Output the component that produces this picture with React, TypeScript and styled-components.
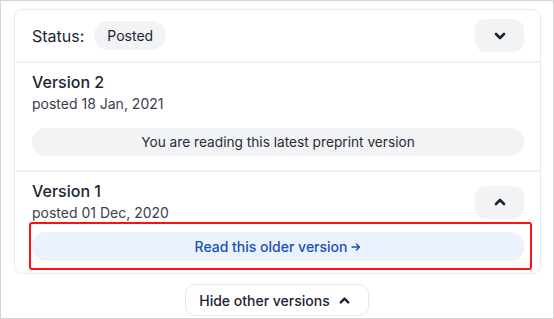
import * as React from "react";
import styled, { createGlobalStyle } from "styled-components";

const GlobalStyle = createGlobalStyle`
  html, body {
    margin: 0;
    padding: 0;
    background: #ffffff;
  }
  body {
    font-family: Inter, "Noto Sans", "Liberation Sans", sans-serif;
    color: #1b2434;
  }
  * {
    box-sizing: border-box;
  }
`;

const Frame = styled.div`
  width: 554px;
  height: 319px;
  border: 1px solid #d6d6d6;
  background: #ffffff;
  padding: 8px 13px 0 13px;
  display: flex;
  flex-direction: column;
  align-items: stretch;
  overflow: hidden;
`;

const Card = styled.div`
  width: 527px;
  border: 1px solid #e9eaec;
  border-radius: 8px;
  display: flex;
  flex-direction: column;
`;

const StatusRow = styled.div`
  display: flex;
  align-items: center;
  justify-content: space-between;
  padding: 9px 16px 9px 17px;
  border-bottom: 2px solid #f0f1f3;
`;

const StatusLeft = styled.div`
  display: flex;
  align-items: center;
  gap: 10px;
`;

const StatusLabel = styled.span`
  font-size: 16px;
  line-height: 20px;
  color: #1b2434;
`;

const Pill = styled.span`
  display: inline-flex;
  align-items: center;
  height: 29px;
  padding: 0 13px;
  border-radius: 15px;
  background: #f2f3f5;
  font-size: 14px;
  color: #1b2434;
`;

const IconButton = styled.button`
  width: 49px;
  height: 33px;
  border: none;
  border-radius: 11px;
  background: #f2f3f5;
  display: flex;
  align-items: center;
  justify-content: center;
  padding: 0;
  color: #1b2434;
  cursor: pointer;
`;

const Section = styled.div<{ $last?: boolean }>`
  display: flex;
  flex-direction: column;
  padding: 9px 16px ${(p) => (p.$last ? "12px" : "14px")} 17px;
  border-bottom: ${(p) => (p.$last ? "none" : "2px solid #f0f1f3")};
`;

const SectionHead = styled.div`
  display: flex;
  align-items: center;
  justify-content: space-between;
`;

const Titles = styled.div`
  display: flex;
  flex-direction: column;
  gap: 2px;
`;

const VersionTitle = styled.div`
  font-size: 16px;
  line-height: 20px;
  font-weight: 500;
  color: #1b2434;
`;

const PostedDate = styled.div`
  font-size: 14px;
  line-height: 20px;
  color: #3b404b;
`;

const Banner = styled.div`
  margin-top: 14px;
  height: 28px;
  border-radius: 14px;
  background: #f2f3f5;
  display: flex;
  align-items: center;
  justify-content: center;
  font-size: 13.7px;
  color: #262c38;
`;

const ReadWrap = styled.div`
  position: relative;
  margin-top: 9px;
`;

const ReadButton = styled.button`
  width: 100%;
  height: 29px;
  border: none;
  border-radius: 14px;
  background: #eaf2fd;
  display: flex;
  align-items: center;
  justify-content: center;
  gap: 4px;
  font-family: inherit;
  font-size: 14px;
  font-weight: 500;
  color: #1c4fb6;
  cursor: pointer;
`;

const Highlight = styled.div`
  position: absolute;
  top: -10px;
  bottom: -9px;
  left: -3px;
  right: -8px;
  border: 2.5px solid #ff1010;
  border-radius: 3px;
  pointer-events: none;
`;

const Footer = styled.div`
  display: flex;
  justify-content: center;
  margin-top: 10px;
`;

const HideButton = styled.button`
  height: 32px;
  display: flex;
  align-items: center;
  gap: 8px;
  padding: 0 17px 0 13px;
  border: 1px solid #e7e8ea;
  border-radius: 10px;
  background: #ffffff;
  font-family: inherit;
  font-size: 14px;
  font-weight: 500;
  color: #1b2434;
  cursor: pointer;
`;

const Chevron: React.FC<{ up?: boolean; size?: number }> = ({ up, size = 14 }) => (
  <svg width={size} height={size} viewBox="0 0 14 14" fill="none">
    <path
      d={up ? "M3 9 L7 5 L11 9" : "M3 5 L7 9 L11 5"}
      stroke="currentColor"
      strokeWidth={2.6}
      strokeLinecap="round"
      strokeLinejoin="round"
    />
  </svg>
);

const Arrow = () => (
  <svg width="10" height="10" viewBox="0 0 10 10" fill="none">
    <path
      d="M1 5 H8.5 M5.5 2 L8.5 5 L5.5 8"
      stroke="currentColor"
      strokeWidth={1.4}
      strokeLinecap="round"
      strokeLinejoin="round"
    />
  </svg>
);

export default function App() {
  return (
    <>
      <GlobalStyle />
      <Frame>
        <Card>
          <StatusRow>
            <StatusLeft>
              <StatusLabel>Status:</StatusLabel>
              <Pill>Posted</Pill>
            </StatusLeft>
            <IconButton aria-label="Expand">
              <Chevron />
            </IconButton>
          </StatusRow>

          <Section>
            <Titles>
              <VersionTitle>Version 2</VersionTitle>
              <PostedDate>posted 18 Jan, 2021</PostedDate>
            </Titles>
            <Banner>You are reading this latest preprint version</Banner>
          </Section>

          <Section $last>
            <SectionHead>
              <Titles>
                <VersionTitle>Version 1</VersionTitle>
                <PostedDate>posted 01 Dec, 2020</PostedDate>
              </Titles>
              <IconButton aria-label="Collapse">
                <Chevron up />
              </IconButton>
            </SectionHead>
            <ReadWrap>
              <ReadButton>
                Read this older version <Arrow />
              </ReadButton>
              <Highlight />
            </ReadWrap>
          </Section>
        </Card>

        <Footer>
          <HideButton>
            Hide other versions <Chevron up size={13} />
          </HideButton>
        </Footer>
      </Frame>
    </>
  );
}
